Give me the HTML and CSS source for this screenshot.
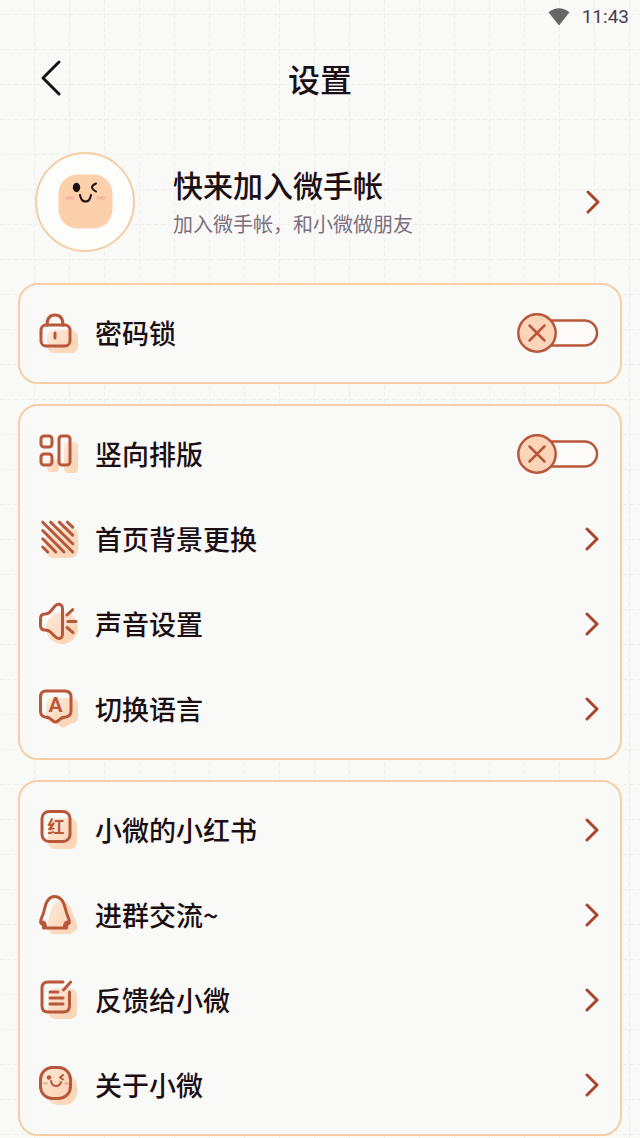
FILE: index.html
```html
<!DOCTYPE html>
<html lang="zh-CN">
<head>
<meta charset="UTF-8" />
<meta name="viewport" content="width=device-width, initial-scale=1" />
<title>设置</title>
<link rel="stylesheet" href="styles.css">
</head>
<body>
  <!-- shared shapes -->
  <svg class="defs" width="0" height="0" aria-hidden="true">
    <defs>
      <linearGradient id="peach" x1="0" y1="0" x2="0.7" y2="0.7">
        <stop offset="0" stop-color="#fdeadb" />
        <stop offset="1" stop-color="#fbd7ba" />
      </linearGradient>
      <symbol id="chevron" viewBox="0 0 14 26">
        <path d="M2 3 L12 13 L2 23" />
      </symbol>
    </defs>
  </svg>

  <div class="status-bar">
    <svg class="wifi" viewBox="0 0 22 18" aria-hidden="true"><path d="M11 17.5 L0.5 4.2 Q11 -3.6 21.5 4.2 Z" /></svg>
    <time>11:43</time>
  </div>

  <header class="header">
    <button type="button" class="back" aria-label="返回">
      <svg viewBox="0 0 22 38" aria-hidden="true"><path d="M19 3 L3 19 L19 35" /></svg>
    </button>
    <h1>设置</h1>
  </header>

  <main class="content">
    <a class="profile" href="#join">
      <svg class="avatar" viewBox="0 0 100 100" aria-hidden="true">
        <circle cx="50" cy="50" r="49" fill="#fdfdfc" stroke="#f5cda3" stroke-width="2" />
        <rect x="23.5" y="22.5" width="54" height="54" rx="19" fill="#fbd0ab" />
        <ellipse cx="41.5" cy="35.5" rx="3.7" ry="4.7" fill="#1c1012" />
        <path d="M61 31.5 Q53 35 61 39.5" fill="none" stroke="#1c1012" stroke-width="2" stroke-linecap="round" />
        <path d="M45 43 Q46 49.5 50.5 49.5 Q55 49.5 56 43" fill="none" stroke="#1c1012" stroke-width="2" stroke-linecap="round" />
        <path d="M32 46 H38 M63 46 H69" fill="none" stroke="#f7b8a2" stroke-width="3.5" stroke-linecap="round" />
      </svg>
      <div class="profile-text">
        <h2>快来加入微手帐</h2>
        <p>加入微手帐，和小微做朋友</p>
      </div>
      <svg class="chevron" aria-hidden="true"><use href="#chevron" /></svg>
    </a>

    <section class="card">
      <label class="row" for="lock">
        <svg class="icon" viewBox="0 0 40 40" aria-hidden="true">
          <rect class="shade" x="9" y="17" width="31" height="23" rx="7" />
          <path d="M9 12 Q9 2 17 2 Q25 2 25 12" />
          <rect x="3" y="12" width="29" height="21" rx="5" />
          <path d="M17 20 V25" />
        </svg>
        <span class="label">密码锁</span>
        <input class="switch" type="checkbox" id="lock" name="lock" />
      </label>
    </section>

    <section class="card">
      <label class="row" for="vertical">
        <svg class="icon" viewBox="0 0 40 40" aria-hidden="true">
          <rect class="shade" x="9" y="25" width="12" height="13" rx="4" />
          <rect class="shade" x="26" y="8" width="14" height="31" rx="4" />
          <rect x="3" y="2" width="11" height="11" rx="3" />
          <rect x="3" y="20" width="11" height="11" rx="3" />
          <rect x="21" y="2" width="11" height="29" rx="3" />
        </svg>
        <span class="label">竖向排版</span>
        <input class="switch" type="checkbox" id="vertical" name="vertical" />
      </label>
      <a class="row" href="#background">
        <svg class="icon" viewBox="0 0 40 40" aria-hidden="true">
          <rect class="shade" x="8" y="8" width="32" height="31" rx="8" />
          <path d="M4.7 3.2 L34.7 33 M12.7 3.2 L34.7 24.7 M21.3 3.2 L34.7 16.2 M29.3 3.2 L34.7 8.2 M4.7 11.5 L26 33 M4.7 19.8 L17.8 33 M4.7 28 L9.7 33" />
        </svg>
        <span class="label">首页背景更换</span>
        <svg class="chevron" aria-hidden="true"><use href="#chevron" /></svg>
      </a>
      <a class="row" href="#sound">
        <svg class="icon" viewBox="0 0 40 40" aria-hidden="true">
          <circle class="shade" cx="24" cy="24" r="16" />
          <path d="M7 10 Q10.5 10 12.5 7.5 L17 2 Q20 -1 23 1 Q24.5 2 24.5 4.5 V30 Q24.5 33 23 34 Q20 35.5 17 32.5 L12.5 28 Q10.5 26 7 26 Q2.5 26 2.5 21.5 V14.5 Q2.5 10 7 10 Z" />
          <path d="M29 11 L34.7 5.7 M30 17.5 H38 M29 23.5 L35 28.7" />
        </svg>
        <span class="label">声音设置</span>
        <svg class="chevron" aria-hidden="true"><use href="#chevron" /></svg>
      </a>
      <a class="row" href="#language">
        <svg class="icon" viewBox="0 0 40 40" aria-hidden="true">
          <path class="shade" d="M14 9 H33 Q40 9 40 16 V27 Q40 34 34 34.5 Q30 35 28 37 Q25 40 22 37 Q19 34.5 16 34.5 Q8 34 8 27 V16 Q8 9 14 9 Z" />
          <path d="M8 2 H27 Q33 2 33 8 V22 Q33 27 28 28 Q24 28 21 31 Q17.5 35 14 31 Q11 28 7 28 Q2.5 27 2.5 22 V8 Q2.5 2 8 2 Z" />
          <text class="letter" x="17.5" y="23">A</text>
        </svg>
        <span class="label">切换语言</span>
        <svg class="chevron" aria-hidden="true"><use href="#chevron" /></svg>
      </a>
    </section>

    <section class="card">
      <a class="row" href="#red">
        <svg class="icon" viewBox="0 0 40 40" aria-hidden="true">
          <rect class="shade" x="10" y="8" width="29" height="31" rx="7" />
          <rect x="4" y="1.5" width="28" height="30" rx="7" />
          <text class="hong" x="18" y="23">红</text>
        </svg>
        <span class="label">小微的小红书</span>
        <svg class="chevron" aria-hidden="true"><use href="#chevron" /></svg>
      </a>
      <a class="row" href="#group">
        <svg class="icon" viewBox="0 0 40 40" aria-hidden="true">
          <path class="shade" d="M23 6 C31 6 33 12 35 19 Q37 25 39 30 Q40 36 36 36 L33 39 H14 L11 36 Q7 35 10 28 C12 18 14 6 23 6 Z" />
          <path d="M16.5 1.5 C23 1.5 26 7 27.5 14 Q28.5 19 30.5 23 Q32.5 28 30 29 Q28 30 28.5 33 H5.5 Q6 30 4 29 Q1.5 28 3.5 23 Q5.5 19 6.5 14 C8 7 10.5 1.5 16.5 1.5 Z" />
          <path d="M4 27 Q7 27 7.500 31 M30 27 Q27 27 26.500 31" />
        </svg>
        <span class="label">进群交流~</span>
        <svg class="chevron" aria-hidden="true"><use href="#chevron" /></svg>
      </a>
      <a class="row" href="#feedback">
        <svg class="icon" viewBox="0 0 40 40" aria-hidden="true">
          <rect class="shade" x="10" y="8" width="29" height="31" rx="7" />
          <path d="M25 2 H10 Q4 2 4 8 V26 Q4 32 10 32 H25 Q31.5 32 31.5 26 V12" />
          <path d="M32.7 2 L25.5 10 M12 12 H20 M12 18 H25 M12 24 H25" />
        </svg>
        <span class="label">反馈给小微</span>
        <svg class="chevron" aria-hidden="true"><use href="#chevron" /></svg>
      </a>
      <a class="row" href="#about">
        <svg class="icon" viewBox="0 0 40 40" aria-hidden="true">
          <rect class="shade" x="8" y="9" width="31" height="31" rx="13" />
          <rect x="2.5" y="2.5" width="30" height="31" rx="12" fill="url(#peach)" />
          <path class="cheek" d="M6 18.5 H9 M27 18.5 H30" />
          <circle class="dot" cx="11" cy="12.5" r="2.3" />
          <path class="thin" d="M25 10 L22 12.500 L25 14.500 M13 16 Q14 21 18 21 Q22 21 23 17" />
        </svg>
        <span class="label">关于小微</span>
        <svg class="chevron" aria-hidden="true"><use href="#chevron" /></svg>
      </a>
    </section>
  </main>
</body>
</html>
```

FILE: styles.css
```css
:root {
  --bg: #f9f9f8;
  --ink: #1c0f14;
  --line: #b9573a;
  --card-border: #f5cda6;
  --font: "Noto Sans CJK SC", sans-serif;
}

* {
  box-sizing: border-box;
}

body {
  margin: 0;
  min-height: 100vh;
  font-family: var(--font);
  color: var(--ink);
  background-color: var(--bg);
  /* dashed notebook grid */
  background-image: url("data:image/svg+xml,%3Csvg xmlns='http://www.w3.org/2000/svg' width='35' height='35'%3E%3Cpath d='M34.5 0V35M0 14.5H35' stroke='%23efefed' fill='none' stroke-dasharray='4 3'/%3E%3C/svg%3E");
}

h1, h2, p {
  margin: 0;
}

a {
  color: inherit;
  text-decoration: none;
}

.defs {
  position: absolute;
}

/* top of the screen */
.status-bar {
  display: flex;
  justify-content: flex-end;
  align-items: center;
  gap: 12px;
  height: 34px;
  padding: 0 11px;
  font: 400 19px/24px Roboto, sans-serif;
  color: #4b3d4e;
}

.wifi {
  width: 22px;
  height: 18px;
  fill: #666;
}

.header {
  display: grid;
  grid-template-columns: 1fr auto 1fr;
  align-items: center;
  height: 88px;
  padding: 0 40px;
}

.header h1 {
  font-size: 32px;
  line-height: 44px;
  font-weight: 500;
}

.back {
  justify-self: start;
  padding: 0;
  border: none;
  background: none;
  cursor: pointer;
}

.back svg {
  display: block;
  width: 22px;
  height: 38px;
  fill: none;
  stroke: #151013;
  stroke-width: 3;
  stroke-linecap: round;
  stroke-linejoin: round;
}

.content {
  display: flex;
  flex-direction: column;
  gap: 20px;
  padding: 30px 18px 0;
}

.profile {
  display: flex;
  align-items: center;
  gap: 38px;
  padding: 0 22px 11px 17px;
}

.avatar {
  flex: none;
  width: 100px;
  height: 100px;
}

.profile-text {
  flex: 1;
  padding-top: 4px;
}

.profile h2 {
  font-size: 30px;
  line-height: 40px;
  font-weight: 500;
}

.profile p {
  font-size: 20px;
  line-height: 40px;
  font-weight: 400;
  color: #7d707e;
}

/* setting groups */
.card {
  padding: 5px 21px 7px 18px;
  border: 2px solid var(--card-border);
  border-radius: 20px;
  background: var(--bg);
}

.row {
  display: flex;
  align-items: center;
  gap: 17px;
  height: 85px;
  cursor: pointer;
}

.label {
  flex: 1;
  font-size: 27px;
  line-height: 40px;
  font-weight: 500;
}

.icon {
  flex: none;
  width: 40px;
  height: 40px;
  overflow: visible;
  fill: none;
  stroke: var(--line);
  stroke-width: 3;
  stroke-linecap: round;
  stroke-linejoin: round;
}

.icon .shade {
  fill: url(#peach);
  stroke: none;
}

.icon .dot {
  fill: var(--line);
  stroke: none;
}

.icon .thin {
  stroke-width: 2;
}

.icon .cheek {
  stroke: #f2a78a;
  stroke-width: 2;
}

.icon text {
  fill: var(--line);
  stroke: none;
  text-anchor: middle;
  font-weight: 700;
}

.letter {
  font-family: Roboto, sans-serif;
  font-size: 21px;
}

.hong {
  font-size: 17px;
}

.chevron {
  flex: none;
  width: 14px;
  height: 26px;
  fill: none;
  stroke: #a9472e;
  stroke-width: 3;
  stroke-linecap: round;
  stroke-linejoin: round;
}

.switch {
  appearance: none;
  flex: none;
  width: 82px;
  height: 40px;
  margin: 0;
  cursor: pointer;
  background: url("data:image/svg+xml,%3Csvg xmlns='http://www.w3.org/2000/svg' viewBox='0 0 82 40' fill='none' stroke='%23b9573a' stroke-width='2.5' stroke-linecap='round'%3E%3Crect x='14' y='7.5' width='66' height='25' rx='12.5' fill='%23fcfbfa'/%3E%3Ccircle cx='20' cy='20' r='18.7' fill='%23fbd5ba'/%3E%3Cpath d='M12.5 12.5L27.5 27.5M27.5 12.5L12.5 27.5'/%3E%3C/svg%3E") center / contain no-repeat;
}

.switch:checked {
  transform: scaleX(-1);
}
```
